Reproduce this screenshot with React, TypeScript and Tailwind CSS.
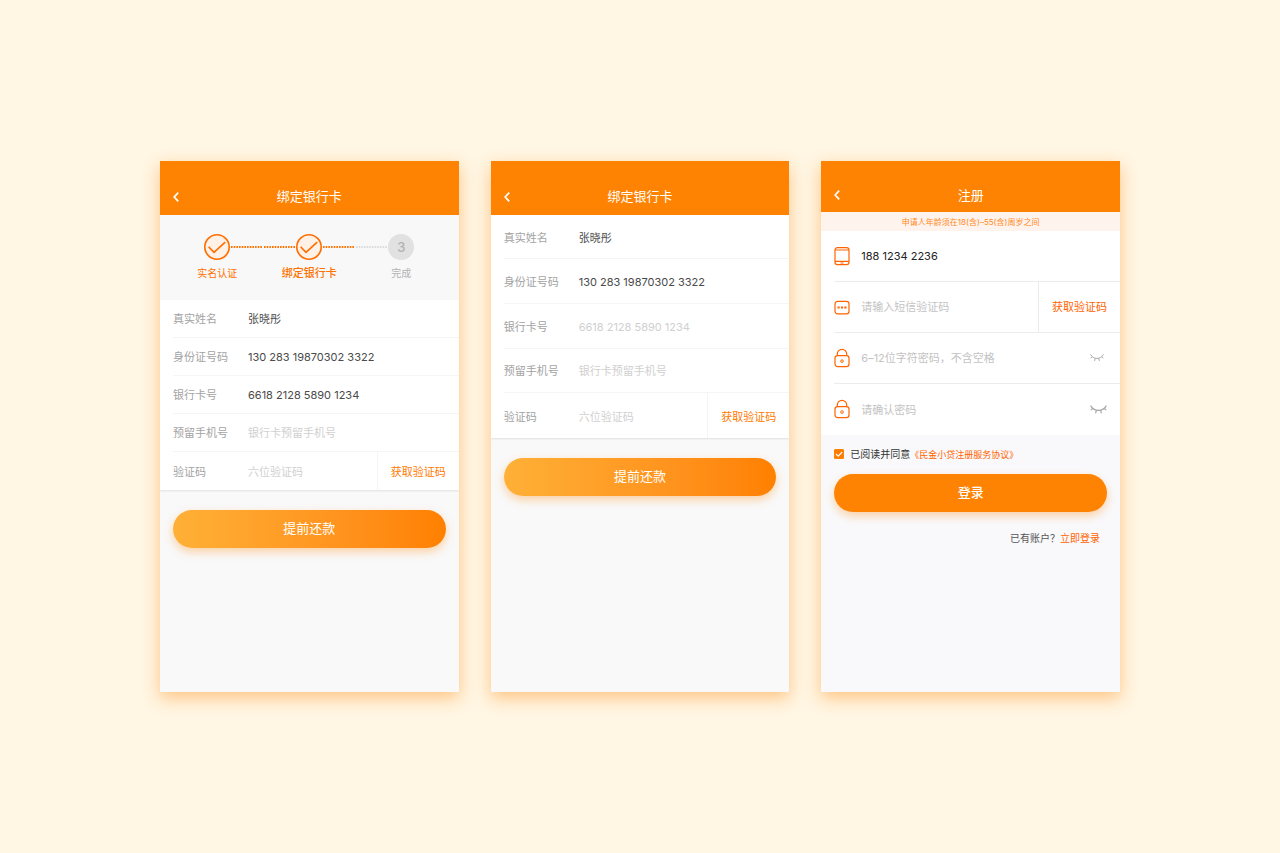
import { clsx } from 'clsx'
import { useId, type ReactNode } from 'react'

function Phone({ children, className }: { children: ReactNode; className: string }) {
  return (
    <section
      className={clsx(
        'flex aspect-[375/667] min-w-0 flex-col overflow-hidden shadow-[0_6px_16px_rgba(255,130,0,0.42)]',
        className,
      )}
    >
      {children}
    </section>
  )
}

function Header({ title, className }: { title: string; className: string }) {
  return (
    <header
      className={clsx(
        'grid grid-cols-[1fr_auto_1fr] items-center bg-[#ff8303] px-[13px] pt-[17px] text-white',
        className,
      )}
    >
      <button type="button" aria-label="返回" className="justify-self-start pt-px">
        <svg viewBox="0 0 6 10" className="h-[10px] w-[6px]" fill="none" stroke="currentColor" strokeWidth="1.7">
          <path d="M5.2 .7 1.2 5l4 4.3" />
        </svg>
      </button>
      <h1 className="text-[13px] leading-[18px]">{title}</h1>
    </header>
  )
}

function CheckCircle() {
  return (
    <svg viewBox="0 0 26 26" className="size-[26px] shrink-0" fill="none" stroke="#ff6c00" strokeWidth="1.6">
      <circle cx="13" cy="13" r="12.2" fill="#fff1e6" />
      <path d="M4.6 12.8 10 18.4 21.2 8.2" />
    </svg>
  )
}

function Dots({ className }: { className?: string }) {
  return (
    <svg className={clsx('h-[2px] min-w-0 flex-1', className)}>
      <line x1="1" y1="1" x2="100%" y2="1" stroke="currentColor" strokeWidth="2" strokeDasharray="1.6 1.07" />
    </svg>
  )
}

function Steps() {
  return (
    <ol className="grid h-[85px] shrink-0 grid-cols-[repeat(3,92px)] justify-center bg-[#f8f8f8] pt-[19px] text-center text-[#ff7200]">
      <li>
        <div className="flex items-center">
          <span className="flex-1" />
          <CheckCircle />
          <Dots />
        </div>
        <p className="text-[10px] leading-[26px]">实名认证</p>
      </li>
      <li>
        <div className="flex items-center">
          <Dots />
          <CheckCircle />
          <Dots />
        </div>
        <p className="text-[11px] leading-[26px] font-medium">绑定银行卡</p>
      </li>
      <li className="text-[#b2b2b2]">
        <div className="flex items-center">
          <Dots className="text-[#dcdcdc]" />
          <span className="size-[26px] rounded-full bg-[#e1e1e1] text-[13px] leading-[26px] font-medium">3</span>
          <span className="flex-1" />
        </div>
        <p className="text-[10px] leading-[26px]">完成</p>
      </li>
    </ol>
  )
}

type FieldProps = {
  label: string
  value?: string
  placeholder?: string
  action?: string
}

function Field({ label, value, placeholder, action }: FieldProps) {
  const id = useId()

  return (
    <div className="flex items-stretch border-b border-[#f5f5f5] last:border-b-0">
      <label htmlFor={id} className="w-[75px] shrink-0 self-center pt-[2px] text-[#a3a3a3]">
        {label}
      </label>
      <input
        id={id}
        defaultValue={value}
        placeholder={placeholder}
        className="min-w-0 flex-1 pt-[2px] text-[#4a4a4a] outline-none placeholder:text-[#d0d0d0]"
      />
      {action && (
        <button type="button" className="border-l border-[#f5f5f5] px-[13px] pt-[2px] text-[#ff7a00]">
          {action}
        </button>
      )}
    </div>
  )
}

function BankForm({ fields, className }: { fields: FieldProps[]; className: string }) {
  return (
    <form className="flex flex-col">
      <div
        className={clsx(
          'grid auto-rows-fr bg-white pl-[13px] text-[11px] leading-4 shadow-[0_1px_2px_rgba(0,0,0,0.1)]',
          className,
        )}
      >
        {fields.map((field) => (
          <Field key={field.label} {...field} />
        ))}
      </div>
      <button
        type="button"
        className="mx-[13px] mt-5 h-[38px] rounded-full bg-linear-to-r from-[#ffb036] to-[#ff8000] text-[13px] text-white shadow-[0_4px_10px_rgba(255,131,3,0.34)]"
      >
        提前还款
      </button>
    </form>
  )
}

const iconProps = {
  viewBox: '0 0 16 20',
  className: 'h-5 w-4',
  fill: 'none',
  stroke: '#ff6400',
  strokeWidth: 1.2,
}

function PhoneIcon() {
  return (
    <svg {...iconProps}>
      <rect x="1" y="1.6" width="14" height="17" rx="2.4" />
      <path d="M1 4h14M1 15.4h14M6.5 17h3" />
    </svg>
  )
}

function CodeIcon() {
  return (
    <svg {...iconProps}>
      <rect x="1" y="4.4" width="14" height="12.4" rx="2.6" />
      <path d="M3.5 10.5h2.2M6.9 10.5h2.2M10.3 10.5h2.2" strokeWidth="2.2" />
    </svg>
  )
}

function LockIcon() {
  return (
    <svg {...iconProps}>
      <rect x="1" y="7.6" width="14" height="11" rx="2.6" />
      <path d="M3.3 7.6V6a4.7 4.7 0 0 1 9.4 0v1.6" />
      <circle cx="8" cy="13.1" r="1.3" strokeWidth="1" />
    </svg>
  )
}

function EyeClosed({ className }: { className: string }) {
  return (
    <svg viewBox="0 0 17 9" className={className} fill="none" stroke="#a8a8a8" strokeWidth="1.2">
      <path d="M.6.6c3.6 6.4 12.2 6.4 15.8 0M2.8 3.2.8 5.2M6.4 5.2 5.6 8.4M10.6 5.2l.8 3.2M14.2 3.2l2 2" />
    </svg>
  )
}

function SignupRow({
  icon,
  label,
  children,
  ...input
}: {
  icon: ReactNode
  label: string
  type: string
  defaultValue?: string
  placeholder?: string
  children?: ReactNode
}) {
  return (
    <div className="flex items-stretch border-b border-[#ececec] last:border-b-0">
      <label className="flex min-w-0 flex-1 items-center gap-[11px]">
        {icon}
        <input
          {...input}
          aria-label={label}
          className="min-w-0 flex-1 pt-px text-[#222] outline-none placeholder:text-[#c3c3c3]"
        />
      </label>
      {children}
    </div>
  )
}

function Signup() {
  return (
    <Phone className="bg-[#f9f9fb]">
      <Header title="注册" className="h-[51px]" />
      <p className="h-[19px] bg-[#fff3ee] text-center text-[8px] leading-[21px] text-[#ff8a1c]">
        申请人年龄须在18(含)–55(含)周岁之间
      </p>
      <form className="flex flex-col">
        <div className="grid h-[204px] auto-rows-fr bg-white pl-[13px] text-[11px] leading-4">
          <SignupRow icon={<PhoneIcon />} label="手机号" type="tel" defaultValue="188 1234 2236" />
          <SignupRow icon={<CodeIcon />} label="短信验证码" type="text" placeholder="请输入短信验证码">
            <button type="button" className="border-l border-[#ececec] px-[13px] pt-px text-[#ff6400]">
              获取验证码
            </button>
          </SignupRow>
          <SignupRow icon={<LockIcon />} label="密码" type="password" placeholder="6–12位字符密码，不含空格">
            <button type="button" aria-label="显示密码" className="pr-4">
              <EyeClosed className="w-[14px]" />
            </button>
          </SignupRow>
          <SignupRow icon={<LockIcon />} label="确认密码" type="password" placeholder="请确认密码">
            <button type="button" aria-label="显示密码" className="pr-[13px]">
              <EyeClosed className="w-[17px]" />
            </button>
          </SignupRow>
        </div>
        <div className="flex h-[39px] items-center px-[13px] text-[10px] text-[#333]">
          <label className="flex items-center">
            <span className="mr-[6px] grid size-[10px]">
              <input
                type="checkbox"
                defaultChecked
                className="peer col-start-1 row-start-1 size-[10px] appearance-none rounded-[1px] border border-[#ff8303] checked:bg-[#ff7a00]"
              />
              <svg
                viewBox="0 0 10 10"
                className="pointer-events-none invisible col-start-1 row-start-1 size-[10px] peer-checked:visible"
                fill="none"
                stroke="#fff"
                strokeWidth="1.2"
              >
                <path d="M2 5l2.2 2.1L8.2 3" />
              </svg>
            </span>
            已阅读并同意
          </label>
          <a href="#terms" className="text-[9px] text-[#ff6400]">
            《民金小贷注册服务协议》
          </a>
        </div>
        <button
          type="button"
          className="mx-[13px] h-[38px] rounded-full bg-[#ff8303] text-[13px] font-medium text-white shadow-[0_4px_10px_rgba(255,131,3,0.34)]"
        >
          登录
        </button>
      </form>
      <p className="mt-4 pr-5 text-right text-[10px] leading-5 text-[#555]">
        已有账户？
        <a href="#login" className="text-[#ff6400]">
          立即登录
        </a>
      </p>
    </Phone>
  )
}

const filledFields: FieldProps[] = [
  { label: '真实姓名', value: '张晓彤' },
  { label: '身份证号码', value: '130 283 19870302 3322' },
  { label: '银行卡号', value: '6618 2128 5890 1234' },
  { label: '预留手机号', placeholder: '银行卡预留手机号' },
  { label: '验证码', placeholder: '六位验证码', action: '获取验证码' },
]

const emptyFields: FieldProps[] = filledFields.map((field) =>
  field.label === '银行卡号' ? { label: field.label, placeholder: field.value } : field,
)

export default function App() {
  return (
    <main className="flex min-h-screen items-center bg-[#fff6e3] px-8 font-['Inter','Noto_Sans_CJK_SC',sans-serif]">
      <div className="mx-auto grid w-full max-w-[960px] grid-cols-3 gap-8">
        <Phone className="bg-[#f9f9f9]">
          <Header title="绑定银行卡" className="h-[54px]" />
          <Steps />
          <BankForm fields={filledFields} className="h-[190px]" />
        </Phone>
        <Phone className="bg-[#f9f9f9]">
          <Header title="绑定银行卡" className="h-[54px]" />
          <BankForm fields={emptyFields} className="h-[223px]" />
        </Phone>
        <Signup />
      </div>
    </main>
  )
}
